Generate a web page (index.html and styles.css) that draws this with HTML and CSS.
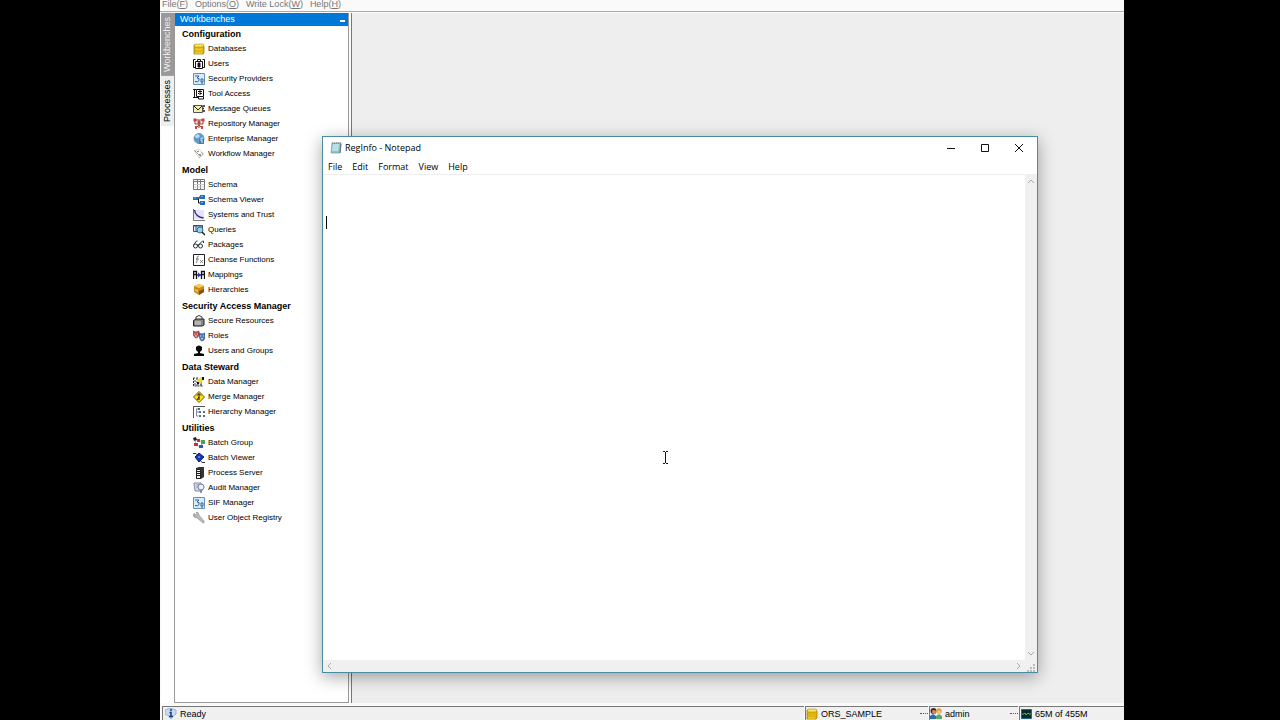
FILE: index.html
```html
<!DOCTYPE html>
<html lang="en">
<head>
  <meta charset="UTF-8" />
  <meta name="viewport" content="width=device-width, initial-scale=1.0" />
  <title>RegInfo - Notepad</title>
  <link rel="stylesheet" href="styles.css">
</head>
<body>
  <div class="app">
    <nav class="app-menu">
      <button>File(<u>F</u>)</button>
      <button>Options(<u>O</u>)</button>
      <button>Write Lock(<u>W</u>)</button>
      <button>Help(<u>H</u>)</button>
    </nav>

    <div class="workspace">
      <div class="tabs">
        <button class="tab active">Workbenches</button>
        <button class="tab">Processes</button>
      </div>

      <aside class="panel">
        <div class="panel-title">
          <span>Workbenches</span>
          <button class="collapse" aria-label="Collapse"></button>
        </div>

        <h2>Configuration</h2>
        <ul>
          <li><a href="#"><svg viewBox="0 0 12 12"><path d="M1 2h9l1 1v7l-1 1H1z" fill="#dfb60f" stroke="#937500" stroke-width=".7"/><path d="M1 2l2-1h7l1 1-1 2H2z" fill="#f8e458" stroke="#a38706" stroke-width=".5"/><path d="M2 6q4 1 7 0M2 10h7" stroke="#f2d84a" fill="none"/></svg>Databases</a></li>
          <li><a href="#"><svg viewBox="0 0 12 12" fill="none" stroke="#111"><path d="M2.500 1.500h-2v8h2M9.500 1.500h2v8h-2"/><path d="M2.500 3.500h7v7h-7zM4.500 3V1.500h3V3"/><path d="M5 5h2v4H5z" fill="#111"/></svg>Users</a></li>
          <li><a href="#"><svg viewBox="0 0 12 12"><path d="M.5.5h11v11H.5z" fill="#dce9f6" stroke="#668fb9"/><path d="M2 3h4L4 5q3 0 2 2.500-1 2-4 1M8 6h2v3H8zM8 10h2" fill="none" stroke="#2b659f"/></svg>Security Providers</a></li>
          <li><a href="#"><svg viewBox="0 0 12 12" fill="none" stroke="#111"><path d="M0 1.500h3M1.500 1v8M0 9.500h5M3.500 1.500h7v7h-7zM5 3.500h4M5 5.500h1m1 0h2M7 2v5M5.500 9v2h5V9"/></svg>Tool Access</a></li>
          <li><a href="#"><svg viewBox="0 0 12 12"><path d="M.5 2.500h9v7h-9z" fill="#f0efab" stroke="#555"/><path d="M1 3l4 4 4-4" stroke="#222" fill="none"/><path d="M10 3h2M10 5.500h1M10 8h2" stroke="#222" stroke-width="1.500"/></svg>Message Queues</a></li>
          <li><a href="#"><svg viewBox="0 0 12 12"><path d="M2 2h8M2 2v4h8V2M6 2v8M3 10l3-3 3 3" stroke="#a23a33" fill="none"/><path d="M.5.5h3v3h-3zM8.500.5h3v3h-3zM4.500 3h3v3h-3zM2 8h2v3H2zM8 8h2v3H8z" fill="#bd4b42"/></svg>Repository Manager</a></li>
          <li><a href="#"><svg viewBox="0 0 12 12"><circle cx="6" cy="5.500" r="5" fill="#5b9bd4" stroke="#7896b4"/><path d="M2 3l3-2 2 2-2 2H3zM7 6l3-2v4L7 9z" fill="#b9ddec"/><path d="M6 6h5v5H6z" fill="#447fae"/><path d="M7 7h2v3" stroke="#dceaf3" fill="none"/></svg>Enterprise Manager</a></li>
          <li><a href="#"><svg viewBox="0 0 12 12"><path d="M1 3l5-2 5 5-5 4z" fill="#f8f8f8" stroke="#ccc" stroke-width=".7"/><path d="M2 3l4 4M8 4l2 2" stroke="#90b49d"/><path d="M4 3h2v1H4zM6 6h2v2H6z" fill="#cf7a71"/><path d="M1 2l2 2M6 10l4-4" stroke="#999" stroke-dasharray="1"/></svg>Workflow Manager</a></li>
        </ul>

        <h2>Model</h2>
        <ul>
          <li><a href="#"><svg viewBox="0 0 12 12" fill="#fff" stroke="#777"><path d="M.5.5h11v10H.5z"/><path d="M.5 2.500h11M4.500.5v10M7.500.5v10"/><path d="M1 5.500h10M1 8h10" stroke="#ccc"/></svg>Schema</a></li>
          <li><a href="#"><svg viewBox="0 0 12 12"><path d="M4 5h2V3h2M5.500 5v4h2" stroke="#111" fill="none"/><path d="M0 3h5v3H0zM7 1h5v4H7zM7 7h5v4H7z" fill="#286cba"/><path d="M1 4h2M8 2.500h2M8 8.500h2" stroke="#73b0e6"/></svg>Schema Viewer</a></li>
          <li><a href="#"><svg viewBox="0 0 12 12"><path d="M1 1h10v9H1z" fill="#e6e4f5"/><path d="M.5 0v11.500H12" stroke="#777" fill="none"/><path d="M1.500 1q1 7 9 8" stroke="#33209b" stroke-width="1.400" fill="none"/></svg>Systems and Trust</a></li>
          <li><a href="#"><svg viewBox="0 0 12 12"><path d="M.5 1.500h9v6h-9z" fill="#e1eefa" stroke="#304f88"/><path d="M0 2h10M3 2v5" stroke="#304f88"/><circle cx="7" cy="6" r="3" fill="#8fd5df" stroke="#326c83"/><path d="M9 8l3 3" stroke="#222" stroke-width="1.500"/></svg>Queries</a></li>
          <li><a href="#"><svg viewBox="0 0 12 12" fill="none" stroke="#26383a"><circle cx="2.500" cy="7" r="2"/><circle cx="7.500" cy="7" r="2"/><path d="M4 6h2M.5 6l3-4h1M5.500 6l4-4h1v2"/></svg>Packages</a></li>
          <li><a href="#"><svg viewBox="0 0 12 12" fill="none"><path d="M.5.500h11v11H.5z" fill="#fff" stroke="#222"/><path d="M6 2q-2 0-2 2v3q0 2-1 2M3 5h3M7 6l3 3M10 6L7 9" stroke="#666" stroke-width=".8"/></svg>Cleanse Functions</a></li>
          <li><a href="#"><svg viewBox="0 0 12 12" fill="none" stroke="#111"><path d="M.5 10V2.500h3V10M.5 5.500h3M8.500 10V2.500h3V10M8.500 5.500h3" stroke-width="1.300"/><path d="M4 6h4" stroke="#293ba5" stroke-width="1.500"/><path d="M5 3.500L8 6 5 8.500z" fill="#293ba5" stroke="none"/></svg>Mappings</a></li>
          <li><a href="#"><svg viewBox="0 0 12 12"><path d="M1 2l5-2 5 2v6l-5 3-5-3z" fill="#c88b16"/><path d="M1 2l5 2 5-2-5-2z" fill="#f4cd58"/><path d="M6 7v4l5-3V5z" fill="#805213"/><path d="M2 5l3 1v2L2 7z" fill="#efc150"/></svg>Hierarchies</a></li>
        </ul>

        <h2>Security Access Manager</h2>
        <ul>
          <li><a href="#"><svg viewBox="0 0 12 12"><path d="M3 5V2q3-3 6 0v3" fill="none" stroke="#333"/><path d="M.5 5.500L3 4h8v6l-2 1H.5z" fill="#888" stroke="#222"/><path d="M2 7h6M2 9h6" stroke="#ddd"/></svg>Secure Resources</a></li>
          <li><a href="#"><svg viewBox="0 0 12 12"><path d="M0 1q3 2 6 0v4Q5 8 3 8 0 7 0 1z" fill="#c4505b" stroke="#612a38" stroke-width=".6"/><path d="M6 3q3 2 6 0v5q-1 3-3 3-3-1-3-8z" fill="#517ec2" stroke="#1e3567" stroke-width=".6"/><path d="M1.500 4h1M4 4h1M2 6h2M7 6h1M10 6h1M8 9q1-1 2 0" stroke="#fff" stroke-width=".8" fill="none"/></svg>Roles</a></li>
          <li><a href="#"><svg viewBox="0 0 12 12"><path d="M3 2Q6-1 9 2v3L7 7v1l4 1v2H1V9l4-1V7L3 5z" fill="#080808"/></svg>Users and Groups</a></li>
        </ul>

        <h2>Data Steward</h2>
        <ul>
          <li><a href="#"><svg viewBox="0 0 12 12"><path d="M.5 2v8h10" stroke="#222" stroke-dasharray="2 1" fill="none"/><path d="M0 2h5M1 5h4M1 8h9M4 2v8M8 5v5" stroke="#444" stroke-dasharray="2 1"/><path d="M4 4l4-3 3 2-4 5H4z" fill="#edda43"/><path d="M9 1h2v3H9zM4 6h2v2H4z" fill="#111"/></svg>Data Manager</a></li>
          <li><a href="#"><svg viewBox="0 0 12 12"><path d="M6 .5L11.500 6 6 11.500.5 6z" fill="#ffdf20" stroke="#6d5a00"/><path d="M6 3v6M4 9l2-3M4 4.500l2-2 2 2" stroke="#111" fill="none"/></svg>Merge Manager</a></li>
          <li><a href="#"><svg viewBox="0 0 12 12" fill="none"><path d="M.5 12V.5H12" stroke="#555"/><path d="M3 3h3M3.500 3v7h2M4 6h2" stroke="#7a8ca4"/><path d="M5 3h2M6 6h2M10 6h2M6 10h2M10 10h2" stroke="#173b74" stroke-width="1.500"/></svg>Hierarchy Manager</a></li>
        </ul>

        <h2>Utilities</h2>
        <ul>
          <li><a href="#"><svg viewBox="0 0 12 12"><path d="M2 2l8 3-3 5-4-2z" fill="none" stroke="#8a9aa8" stroke-width=".7"/><path d="M0 1l3-1 1 3-3 1z" fill="#222"/><path d="M4 2h3v3H4z" fill="#c33535"/><path d="M8 3h4v4H8z" fill="#4aa34c"/><path d="M1 6h4v3H1z" fill="#cf3030"/><path d="M6 8h4v3H6z" fill="#285ac0"/></svg>Batch Group</a></li>
          <li><a href="#"><svg viewBox="0 0 12 12"><path d="M0 1.500h3l2 2M7 8l2 2.500h3" stroke="#333" fill="none"/><path d="M6 1l5 4-5 5-4-5z" fill="#1639b8" stroke="#101b6b"/><path d="M5 4h2v2H5z" fill="#4c83f2"/></svg>Batch Viewer</a></li>
          <li><a href="#"><svg viewBox="0 0 12 12"><path d="M3 1l3-1h5v10l-3 2H3z" fill="#333"/><path d="M3.500 2.500h4v9h-4z" fill="#eee" stroke="#222"/><path d="M4 4.500h3M4 6.500h3M4 8.500h3" stroke="#222"/></svg>Process Server</a></li>
          <li><a href="#"><svg viewBox="0 0 12 12"><path d="M1 1h7l1 8H2z" fill="#d7d9e9" stroke="#898ca8"/><path d="M3 3h4M3 5h3" stroke="#9da2c2"/><circle cx="8" cy="5" r="3" fill="#edf1fa" stroke="#747a99"/><path d="M8 8v3" stroke="#777a96" stroke-width="1.500"/></svg>Audit Manager</a></li>
          <li><a href="#"><svg viewBox="0 0 12 12"><path d="M.5.5h11v11H.5z" fill="#dce9f6" stroke="#668fb9"/><path d="M2 3h4L4 5q3 0 2 2.500-1 2-4 1M8 6h2v3H8zM8 10h2" fill="none" stroke="#2b659f"/></svg>SIF Manager</a></li>
          <li><a href="#"><svg viewBox="0 0 12 12"><path d="M1 1l2 2 1-1-1-2q3 0 3 3l5 6q1 2-1 2L4 6Q0 6 0 2l2 2z" fill="#b9b9b9" stroke="#888" stroke-width=".5"/></svg>User Object Registry</a></li>
        </ul>
      </aside>

      <main class="desktop"></main>
    </div>

    <footer class="status">
      <div class="cell ready">
        <svg viewBox="0 0 12 12"><path d="M0 2l5-2 6 2v4l-3 2-2 3-2-3-4-2z" fill="#c8dcf0" stroke="#7c9fc4" stroke-width=".7"/><path d="M4.500 4.500H6V8M4 8.500h4M5 2h2" fill="none" stroke="#123a86" stroke-width="1.500"/></svg>
        <span>Ready</span>
      </div>
      <div class="cell database">
        <svg viewBox="0 0 12 12"><path d="M1 2h9l1 1v7l-1 1H1z" fill="#dfb60f" stroke="#937500" stroke-width=".7"/><path d="M1 2l2-1h7l1 1-1 2H2z" fill="#f8e458" stroke="#a38706" stroke-width=".5"/><path d="M2 10h7" stroke="#f2d84a"/></svg>
        <span>ORS_SAMPLE</span>
        <button class="more" aria-label="Change database"></button>
      </div>
      <div class="cell user">
        <svg viewBox="0 0 12 12"><circle cx="3.500" cy="3" r="3" fill="#4b2b1c"/><circle cx="4" cy="4" r="2" fill="#d98a58"/><path d="M0 11V8l3-2 3 2v3z" fill="#2e6db4"/><circle cx="9" cy="3" r="2.700" fill="#d9a336"/><circle cx="9" cy="4" r="1.700" fill="#f2c691"/><path d="M6 11V8l3-2 3 2v3z" fill="#62a565"/></svg>
        <span>admin</span>
        <button class="more" aria-label="Change user"></button>
      </div>
      <div class="cell memory">
        <svg viewBox="0 0 12 12"><path d="M1.500 1.500h10v9h-10z" fill="#0b2926" stroke="#286493"/><path d="M2 6h2l1-1 1 2 2-2 1 1h2" fill="none" stroke="#39c764"/></svg>
        <span>65M of 455M</span>
      </div>
    </footer>

    <section class="notepad">
      <header class="titlebar">
        <svg class="note-icon" viewBox="0 0 12 12"><path d="M2 1h9l-1 10H1z" fill="#8fc2cc" stroke="#6f9da8" stroke-width=".7"/><path d="M3 2h6L8 9H2z" fill="#b9e0e5"/><path d="M2 1h9" stroke="#777" stroke-dasharray="1"/><path d="M11 2l-1 9" stroke="#55737d"/></svg>
        <span class="title">RegInfo - Notepad</span>
        <div class="controls">
          <button aria-label="Minimize"><svg viewBox="0 0 10 10"><path d="M1 5.500h8"/></svg></button>
          <button aria-label="Maximize"><svg viewBox="0 0 10 10"><path d="M1.500 1.500h7v7h-7z"/></svg></button>
          <button aria-label="Close"><svg viewBox="0 0 10 10"><path d="M1 1l8 8M9 1L1 9"/></svg></button>
        </div>
      </header>
      <nav class="note-menu">
        <button>File</button>
        <button>Edit</button>
        <button>Format</button>
        <button>View</button>
        <button>Help</button>
      </nav>
      <div class="editor">
        <textarea aria-label="Text editor" spellcheck="false"></textarea>
        <span class="caret"></span>
        <div class="scroll-y">
          <svg viewBox="0 0 8 8"><path d="M1 5l3-3 3 3"/></svg>
          <svg viewBox="0 0 8 8"><path d="M1 3l3 3 3-3"/></svg>
        </div>
        <div class="scroll-x">
          <svg viewBox="0 0 8 8"><path d="M5 1L2 4l3 3"/></svg>
          <svg viewBox="0 0 8 8"><path d="M3 1l3 3-3 3"/></svg>
        </div>
        <svg class="grip" viewBox="0 0 12 12"><path d="M8 4h2v2H8zM5 7h2v2H5zM8 7h2v2H8zM2 10h2v2H2zM5 10h2v2H5zM8 10h2v2H8z" fill="#bbb"/></svg>
      </div>
    </section>

    <svg class="pointer" viewBox="0 0 7 13"><path d="M1 .5h2m1 0h2M1 12.500h2m1 0h2M3.500 1v11" stroke="#111" fill="none"/></svg>
  </div>
</body>
</html>
```
FILE: styles.css
```css
* {
  margin: 0;
  padding: 0;
  box-sizing: border-box;
}

body {
  height: 100vh;
  padding: 0 156px 0 160px;
  background: #000;
  color: #000;
  font-family: "Liberation Sans", Arial, sans-serif;
  font-size: 9px;
  overflow: hidden;
}

button {
  border: none;
  background: none;
  color: inherit;
  font: inherit;
}

svg {
  flex: none;
  width: 12px;
  height: 12px;
}

.app {
  position: relative;
  height: 100%;
  display: flex;
  flex-direction: column;
  background: #fafafa;
}

.app-menu {
  display: flex;
  gap: 7px;
  height: 12px;
  padding-left: 2px;
  line-height: 8px;
  color: #777;
  border-bottom: 1px solid #aaa;
}

.app-menu button {
  height: 8px;
}

.workspace {
  flex: 1;
  display: flex;
  min-height: 0;
  padding: 1px 0 3px 1px;
}

/* vertical tabs */
.tabs {
  width: 13px;
  display: flex;
  flex-direction: column;
  background: #fff;
}

.tab {
  width: 13px;
  padding: 4px 0;
  line-height: 13px;
  writing-mode: vertical-rl;
  transform: rotate(180deg);
  background: #eee;
}

.tab.active {
  background: #999;
  color: #eee;
}

/* workbench list */
.panel {
  width: 175px;
  background: #fff;
  border: 1px solid #999;
  border-top: none;
}

.panel-title {
  display: flex;
  justify-content: space-between;
  height: 13px;
  padding: 0 3px 0 5px;
  line-height: 13px;
  background: #0078d7;
  color: #fff;
}

.collapse {
  width: 5px;
  height: 9px;
  border-bottom: 2px solid #fff;
}

.panel h2 {
  height: 15px;
  padding-left: 7px;
  line-height: 17px;
  font-size: 9px;
}

.panel ul {
  padding-bottom: 1px;
  list-style: none;
}

.panel li {
  height: 15px;
  padding-left: 18px;
}

.panel a {
  display: flex;
  align-items: center;
  gap: 3px;
  height: 15px;
  font-size: 8px;
  color: #000;
  text-decoration: none;
}

.desktop {
  flex: 1;
  margin-left: 2px;
  background: #eee;
  border-left: 1px solid #777;
}

/* status bar */
.status {
  display: flex;
  gap: 1px;
  height: 14px;
  padding-left: 2px;
}

.cell {
  display: flex;
  align-items: center;
  gap: 3px;
  border-top: 1px solid #777;
  border-left: 1px solid #777;
  background: #f0f0f0;
}

.ready {
  flex: 1;
  padding-left: 2px;
}

.database {
  width: 123px;
}

.user {
  width: 89px;
}

.memory {
  width: 105px;
}

.more {
  width: 8px;
  height: 2px;
  margin-left: auto;
  border-top: 1px dotted #555;
}

/* notepad window */
.notepad {
  position: absolute;
  top: 136px;
  right: 86px;
  bottom: 47px;
  left: 162px;
  display: flex;
  flex-direction: column;
  background: #fff;
  border: 1px solid #478ba5;
  box-shadow: 0 4px 16px rgba(0, 0, 0, 0.35);
  font-family: "Open Sans", "Segoe UI", sans-serif;
}

.titlebar {
  display: flex;
  align-items: center;
  gap: 3px;
  height: 21px;
  padding: 0 13px 0 7px;
}

.controls {
  display: flex;
  gap: 24px;
  margin-left: auto;
}

.controls button {
  display: flex;
}

.controls svg {
  width: 10px;
  height: 10px;
  fill: none;
  stroke: #111;
}

.note-menu {
  display: flex;
  gap: 10px;
  height: 17px;
  padding-left: 5px;
  line-height: 17px;
  border-bottom: 1px solid #eee;
}

.editor {
  position: relative;
  flex: 1;
  display: grid;
  grid-template-columns: 1fr 12px;
  grid-template-rows: 1fr 12px;
  background: #f0f0f0;
}

.editor textarea {
  border: none;
  outline: none;
  resize: none;
  padding: 2px 4px;
  font: inherit;
  background: #fff;
}

.caret {
  position: absolute;
  top: 41px;
  left: 3px;
  width: 1px;
  height: 13px;
  background: #000;
}

.scroll-y,
.scroll-x {
  display: flex;
  justify-content: space-between;
  align-items: center;
  padding: 3px;
}

.scroll-y {
  flex-direction: column;
}

.editor svg {
  width: 8px;
  height: 8px;
  fill: none;
  stroke: #aaa;
}

.editor .grip {
  width: 12px;
  height: 12px;
  stroke: none;
}

.pointer {
  position: absolute;
  top: 451px;
  left: 502px;
  width: 7px;
  height: 13px;
}
```
